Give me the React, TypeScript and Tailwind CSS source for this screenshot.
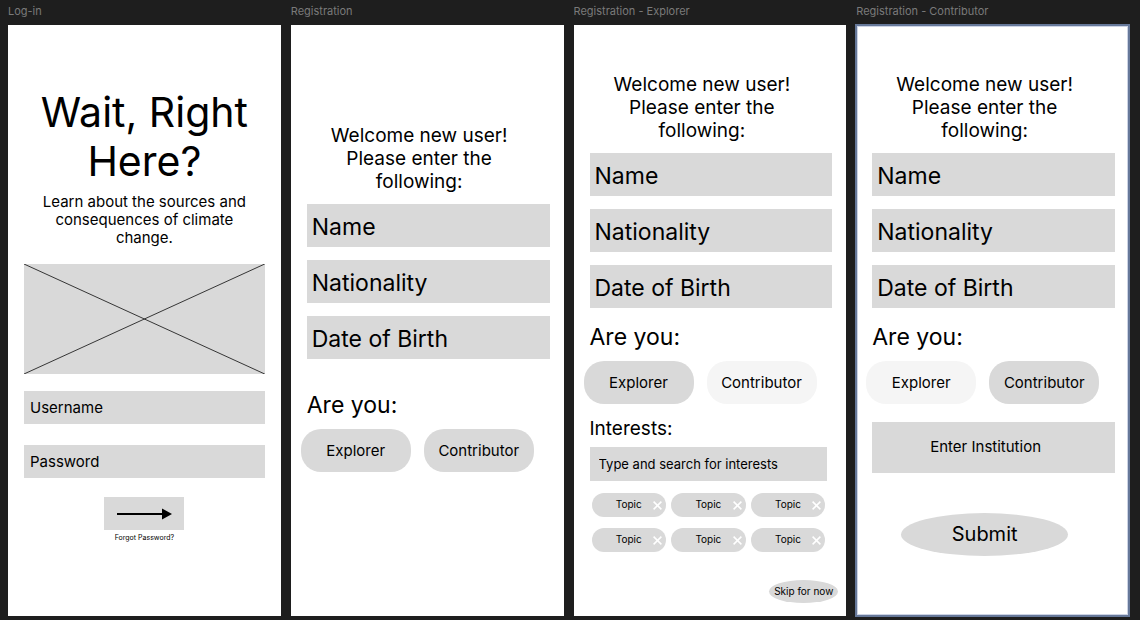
import type { ReactNode } from "react";

function Frame({ label, selected = false, children }: { label: string; selected?: boolean; children: ReactNode }) {
  return (
    <section className="flex min-w-0 flex-col">
      <h2 className="h-[25px] truncate pt-1 text-[11px] leading-[15px] text-[#7a7a7a]">{label}</h2>
      <div
        className={
          selected
            ? "flex flex-1 flex-col bg-white outline-2 -outline-offset-1 outline-[#667899] inset-ring-2 inset-ring-[#ccd3e4]"
            : "flex flex-1 flex-col bg-white"
        }
      >
        {children}
      </div>
    </section>
  );
}

function LoginInput({ label, type }: { label: string; type: string }) {
  return (
    <input
      type={type}
      aria-label={label}
      placeholder={label}
      className="h-[33px] w-full bg-[#d9d9d9] px-1.5 text-[15px] text-black outline-none placeholder:text-black"
    />
  );
}

function Welcome() {
  return (
    <p className="pr-4 text-center text-[19px] leading-[23px]">
      Welcome new user!
      <br />
      Please enter the
      <br />
      following:
    </p>
  );
}

const FIELDS = ["Name", "Nationality", "Date of Birth"];

function ProfileFields() {
  return (
    <div className="mt-[11px] flex flex-col gap-[13px] pr-3.5 pl-4">
      {FIELDS.map((field) => (
        <input
          key={field}
          type="text"
          aria-label={field}
          placeholder={field}
          className="h-[43px] w-full bg-[#d9d9d9] px-[5px] pt-0.5 text-[23px] text-black outline-none placeholder:text-black"
        />
      ))}
    </div>
  );
}

type Role = "Explorer" | "Contributor";
const ROLES: Role[] = ["Explorer", "Contributor"];

function RolePicker({ active }: { active?: Role }) {
  return (
    <>
      <h3 className="pl-4 text-[23px] leading-7">Are you:</h3>
      <div className="mt-2.5 flex gap-[13px] pl-2.5">
        {ROLES.map((role) => (
          <button
            key={role}
            type="button"
            className={
              active && active !== role
                ? "h-[43px] w-[110px] rounded-[20px] bg-[#f5f5f5] pt-0.5 text-[15px]"
                : "h-[43px] w-[110px] rounded-[20px] bg-[#d9d9d9] pt-0.5 text-[15px]"
            }
          >
            {role}
          </button>
        ))}
      </div>
    </>
  );
}

function Topic() {
  return (
    <button
      type="button"
      className="relative flex h-6 items-center justify-center rounded-full bg-[#d9d9d9] pb-0.5 text-[10px] leading-3"
    >
      Topic
      <svg className="absolute top-2 right-1 size-[9px]" viewBox="0 0 9 9" stroke="white" strokeWidth="1.5" aria-hidden="true">
        <path d="M0.6 0.6 8.4 8.4M8.4 0.6 0.6 8.4" />
      </svg>
    </button>
  );
}

export default function App() {
  return (
    <main className="grid min-h-screen grid-cols-4 gap-2.5 bg-[#1e1e1e] pr-[11px] pb-1 pl-2 font-['Inter',sans-serif] text-black">
      <Frame label="Log-in">
        <form className="flex flex-col px-4 pt-[63px]">
          <h1 className="text-center text-[41px] leading-[49px]">
            Wait, Right
            <br />
            Here?
          </h1>
          <p className="mt-[7px] text-center text-[15px] leading-[18px]">
            Learn about the sources and
            <br />
            consequences of climate
            <br />
            change.
          </p>
          <svg
            className="mt-[17px] h-[110px] w-full bg-[#d9d9d9]"
            viewBox="0 0 240 110"
            preserveAspectRatio="none"
            stroke="#222"
            strokeWidth="0.9"
            aria-hidden="true"
          >
            <path d="M0 0 240 110M240 0 0 110" />
          </svg>
          <div className="mt-[17px] flex flex-col gap-[21px]">
            <LoginInput label="Username" type="text" />
            <LoginInput label="Password" type="password" />
          </div>
          <button
            type="button"
            aria-label="Log in"
            className="mt-[19px] flex h-[33px] w-20 items-center justify-center self-center bg-[#d9d9d9]"
          >
            <svg className="h-3 w-[55px]" viewBox="0 0 55 12" aria-hidden="true">
              <path d="M0 6H46" stroke="black" strokeWidth="2" />
              <path d="M45 0.6 55 6 45 11.4Z" />
            </svg>
          </button>
          <a href="#forgot" className="mt-[3px] self-center text-[7px] leading-2.5">
            Forgot Password?
          </a>
        </form>
      </Frame>

      <Frame label="Registration">
        <form className="flex flex-col pt-[99px]">
          <Welcome />
          <ProfileFields />
          <div className="mt-8">
            <RolePicker />
          </div>
        </form>
      </Frame>

      <Frame label="Registration - Explorer">
        <form className="flex flex-col pt-12">
          <Welcome />
          <ProfileFields />
          <div className="mt-[15px]">
            <RolePicker active="Explorer" />
          </div>
          <label htmlFor="interests" className="mt-[13px] pl-4 text-[19px] leading-6">
            Interests:
          </label>
          <div className="mt-1.5 pr-[19px] pl-4">
            <input
              id="interests"
              type="text"
              placeholder="Type and search for interests"
              className="block h-[34px] w-full bg-[#d9d9d9] px-[9px] text-[13px] text-black outline-none placeholder:text-black"
            />
          </div>
          <div className="mt-3 grid grid-cols-3 gap-x-[5px] gap-y-[11px] pr-[21px] pl-[18px]">
            {[0, 1, 2, 3, 4, 5].map((n) => (
              <Topic key={n} />
            ))}
          </div>
          <button
            type="button"
            className="mt-7 mr-2 h-[23px] w-[69px] self-end rounded-[50%] bg-[#d9d9d9] text-[10px] whitespace-nowrap"
          >
            Skip for now
          </button>
        </form>
      </Frame>

      <Frame label="Registration - Contributor" selected>
        <form className="flex flex-col pt-12">
          <Welcome />
          <ProfileFields />
          <div className="mt-[15px]">
            <RolePicker active="Contributor" />
          </div>
          <div className="mt-[18px] pr-3.5 pl-4">
            <input
              type="text"
              aria-label="Enter Institution"
              placeholder="Enter Institution"
              className="block h-[51px] w-full bg-[#d9d9d9] pr-4 pb-0.5 text-center text-[15px] text-black outline-none placeholder:text-black"
            />
          </div>
          <div className="mt-10 flex justify-center pr-4">
            <button type="button" className="h-[43px] w-[167px] rounded-[50%] bg-[#d9d9d9] pb-0.5 text-[20px]">
              Submit
            </button>
          </div>
        </form>
      </Frame>
    </main>
  );
}
